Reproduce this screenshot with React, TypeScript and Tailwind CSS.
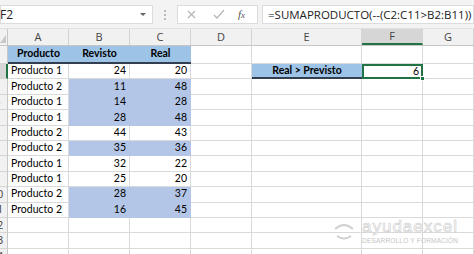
import React from "react";

const rows: [string, number, number][] = [
  ["Producto 1", 24, 20],
  ["Producto 2", 11, 48],
  ["Producto 1", 14, 28],
  ["Producto 1", 28, 48],
  ["Producto 2", 44, 43],
  ["Producto 2", 35, 36],
  ["Producto 1", 32, 22],
  ["Producto 1", 25, 20],
  ["Producto 2", 28, 37],
  ["Producto 2", 16, 45],
];

const cols = ["A", "B", "C", "D", "E", "F", "G"];
const colW = ["w-[61px]", "w-[61px]", "w-[61px]", "w-[61px]", "w-[110px]", "w-[61px]", "flex-1"];

const grid = "border-r border-b border-[#dadada]";
const blue = "bg-[#b4c6e7] border-r border-b border-[#b4c6e7]";

function RowHead({ n, active }: { n: number; active?: boolean }) {
  return (
    <div
      className={`w-[8px] shrink-0 overflow-hidden border-b border-[#d4d4d4] ${
        active ? "bg-[#d6d6d6] border-r-2 border-r-[#217346]" : "bg-[#f1f1f1] border-r border-r-[#c6c6c6]"
      }`}
    >
      <div
        className="w-[26px] -ml-[16px] h-full flex items-center justify-center text-[11px] text-[#444] whitespace-nowrap"
        style={{ fontFamily: "'Open Sans', sans-serif" }}
      >
        {n}
      </div>
    </div>
  );
}

export default function App() {
  return (
    <div
      className="w-[474px] h-[254px] overflow-hidden bg-white relative text-black whitespace-nowrap"
      style={{ fontFamily: "Lato, 'Liberation Sans', sans-serif" }}
    >
      {/* formula bar */}
      <div className="h-[29px] bg-[#f3f3f3] flex items-start pt-[5px] border-b border-[#e1e1e1]">
        <div className="w-[153px] h-[19px] bg-white border border-[#dcdcdc] flex items-center justify-between pr-[6px]">
          <span className="text-[12px] -ml-[1px] text-[#222]" style={{ fontFamily: "'Open Sans', sans-serif" }}>
            F2
          </span>
          <span className="w-0 h-0 border-l-[3px] border-r-[3px] border-t-[3px] border-l-transparent border-r-transparent border-t-[#666]" />
        </div>
        <div className="w-[24px] h-[19px] flex flex-col items-center justify-center gap-[2px]">
          <span className="w-[2px] h-[2px] bg-[#bbb]" />
          <span className="w-[2px] h-[2px] bg-[#bbb]" />
          <span className="w-[2px] h-[2px] bg-[#bbb]" />
        </div>
        <div className="w-[81px] h-[19px] bg-white border border-[#dcdcdc] flex items-center">
          <svg width="28" height="17" viewBox="0 0 28 17" className="shrink-0">
            <path d="M10 5 L17 12 M17 5 L10 12" stroke="#b5b5b5" strokeWidth="1.2" fill="none" />
          </svg>
          <svg width="26" height="17" viewBox="0 0 26 17" className="shrink-0">
            <path d="M8 9 L11 12 L18 4" stroke="#b5b5b5" strokeWidth="1.2" fill="none" />
          </svg>
          <span className="ml-[6px] text-[11px] italic text-[#555]" style={{ fontFamily: "'Liberation Serif', serif" }}>
            f<span className="text-[9px]">x</span>
          </span>
        </div>
        <div className="ml-[4px] flex-1 h-[19px] bg-white border border-[#dcdcdc] flex items-center pl-[5px]">
          <span className="text-[11.5px] text-[#222]" style={{ fontFamily: "'Open Sans', sans-serif" }}>
            =SUMAPRODUCTO(--(C2:C11&gt;B2:B11))
          </span>
        </div>
      </div>

      {/* column headers */}
      <div className="flex h-[17px] bg-[#f1f1f1] border-b border-[#c6c6c6]">
        <div className="w-[8px] shrink-0 border-r border-[#c6c6c6] relative">
          <svg width="6" height="8" viewBox="0 0 6 8" className="absolute right-[1px] bottom-[2px]">
            <path d="M6 0 L6 8 L0 8 Z" fill="#c8c8c8" />
          </svg>
        </div>
        {cols.map((c, i) => (
          <div
            key={c}
            className={`${colW[i]} shrink-0 flex items-center justify-center text-[11px] text-[#444] border-r border-[#d4d4d4] ${
              c === "F" ? "bg-[#d6d6d6] border-b-2 border-b-[#217346]" : ""
            }`}
            style={{ fontFamily: "'Open Sans', sans-serif" }}
          >
            {c}
          </div>
        ))}
      </div>

      {/* row 1 */}
      <div className="flex h-[18px] text-[10.5px]">
        <RowHead n={1} />
        <div className="w-[61px] shrink-0 bg-[#9dc3e6] border-b-2 border-[#333f50] flex items-center justify-center font-bold">
          Producto
        </div>
        <div className="w-[61px] shrink-0 bg-[#9dc3e6] border-b-2 border-[#333f50] flex items-center justify-center font-bold">
          Revisto
        </div>
        <div className="w-[61px] shrink-0 bg-[#9dc3e6] border-b-2 border-[#333f50] flex items-center justify-center font-bold">
          Real
        </div>
        <div className={`w-[61px] shrink-0 ${grid}`} />
        <div className={`w-[110px] shrink-0 ${grid}`} />
        <div className={`w-[61px] shrink-0 ${grid}`} />
        <div className={`flex-1 ${grid}`} />
      </div>

      {rows.map(([p, r, q], i) => {
        const hi = q > r;
        const n = i + 2;
        return (
          <div key={n} className="flex h-[15.4px] text-[10.5px]">
            <RowHead n={n} active={n === 2} />
            <div className={`w-[61px] shrink-0 overflow-hidden ${grid} flex items-center pl-[3px]`}>{p}</div>
            <div className={`w-[61px] shrink-0 ${hi ? blue : grid} flex items-center justify-end pr-[3px]`}>{r}</div>
            <div className={`w-[61px] shrink-0 ${hi ? blue : grid} flex items-center justify-end pr-[3px]`}>{q}</div>
            <div className={`w-[61px] shrink-0 ${grid}`} />
            {n === 2 ? (
              <>
                <div className="w-[110px] shrink-0 bg-[#9dc3e6] border-b-2 border-[#333f50] flex items-center justify-center font-bold">
                  Real &gt; Previsto
                </div>
                <div className="w-[61px] shrink-0 border-2 border-[#217346] relative flex items-center justify-end pr-[2px]">
                  6
                  <span className="absolute -right-[4px] -bottom-[4px] w-[5px] h-[5px] bg-[#217346] border border-white" />
                </div>
              </>
            ) : (
              <>
                <div className={`w-[110px] shrink-0 ${grid}`} />
                <div className={`w-[61px] shrink-0 ${grid}`} />
              </>
            )}
            <div className={`flex-1 ${grid}`} />
          </div>
        );
      })}

      {[12, 13, 14].map((n) => (
        <div key={n} className="flex h-[15.4px]">
          <RowHead n={n} />
          {colW.map((w, i) => (
            <div key={i} className={`${w} shrink-0 ${grid}`} />
          ))}
        </div>
      ))}

      {/* watermark */}
      <div className="absolute left-[332px] top-[218px] flex items-center gap-[6px]">
        <svg width="24" height="24" viewBox="0 0 24 24">
          <path d="M3 10 Q12 2 21 10" stroke="#d0d0d0" strokeWidth="2" fill="none" />
          <path d="M5 17 Q12 22 19 17" stroke="#d0d0d0" strokeWidth="2" fill="none" />
        </svg>
        <div className="flex flex-col leading-none">
          <span
            className="text-[17px] tracking-[1px] text-white"
            style={{ WebkitTextStroke: "0.6px #cccccc", fontFamily: "'Liberation Sans', sans-serif" }}
          >
            ayudaexcel
          </span>
          <span className="text-[6.5px] mt-[3px] text-[#c4c4c4] tracking-[0.2px]" style={{ fontFamily: "'Liberation Sans', sans-serif" }}>
            DESARROLLO Y FORMACIÓN
          </span>
        </div>
      </div>
    </div>
  );
}
